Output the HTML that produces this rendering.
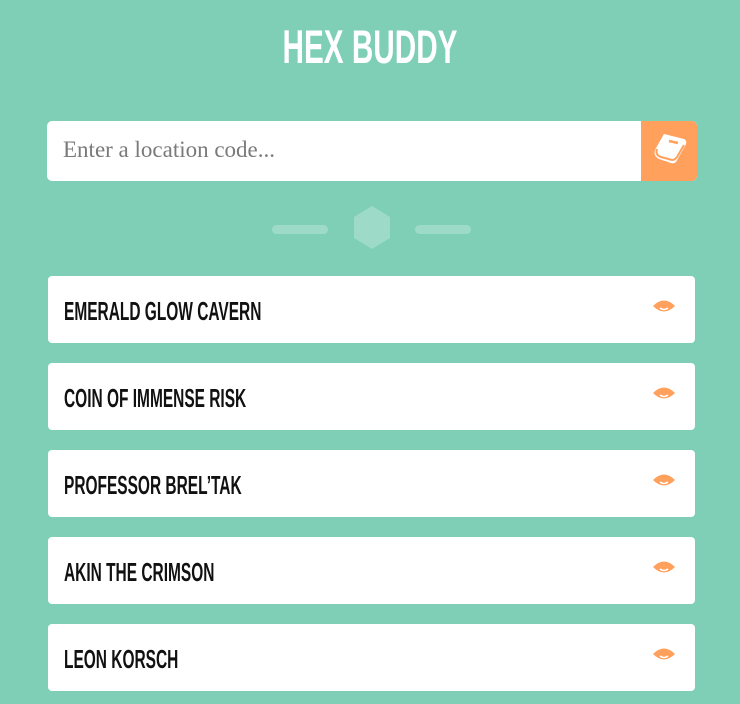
<!DOCTYPE html>
<html><head><style>
body{margin:0;width:740px;height:704px;background:#7ecfb5;font-family:"Liberation Sans",sans-serif;overflow:hidden;position:relative}
h1{position:absolute;top:19px;left:0;width:740px;text-align:center;margin:0;color:#fff;font-size:47px;font-weight:bold;transform:scaleX(0.632);letter-spacing:0}
.inp{position:absolute;left:47px;top:121px;width:650px;height:60px;background:#fff;border-radius:5px;overflow:hidden}
.inp span{position:absolute;left:16px;top:16px;font-family:"Liberation Serif",serif;font-size:23px;color:#7a7a7a}
.btn{position:absolute;right:0;top:0;width:56px;height:60px;background:#ffa15c}
.bar{position:absolute;top:225px;width:56px;height:9px;border-radius:5px;background:#9ddbc8}
.card{position:absolute;left:48px;width:647px;height:67px;background:#fff;border-radius:4px}
.card b{position:absolute;left:16px;top:20px;font-size:26px;font-weight:bold;color:#111;white-space:nowrap;transform:scaleX(0.595);transform-origin:left}
.card svg{position:absolute;left:604px;top:22px}
</style></head><body>
<h1>HEX BUDDY</h1>
<div class="inp"><span>Enter a location code...</span><div class="btn">
<svg width="56" height="60" viewBox="0 0 56 60"><path d="M23 13 L43 18 Q47 20 44 25 L35 41 Q33 43 30 42 L18 38 Q11 34 15 27 Z" fill="#fff"/><path d="M16 28 Q14 34 20 36 L31 39 Q34 39 36 36 L43 24" fill="none" stroke="#ffa15c" stroke-width="2"/><path d="M28 20 L37 22" stroke="#ffa15c" stroke-width="2.5"/></svg></div></div>
<div class="bar" style="left:272px"></div><div class="bar" style="left:415px"></div>
<svg style="position:absolute;left:353px;top:206px" width="38" height="43"><polygon points="19,0 37,11 37,32 19,43 1,32 1,11" fill="#9ddbc8"/></svg>
<div class="card" style="top:276px"><b>EMERALD GLOW CAVERN</b><svg width="24" height="16"><path d="M1 8 Q12 -3 23 8 Q12 19 1 8Z" fill="#ffa15c"/><path d="M8 10 Q12 13 16 10" stroke="#fff" stroke-width="1.5" fill="none"/></svg></div>
<div class="card" style="top:363px"><b>COIN OF IMMENSE RISK</b><svg width="24" height="16"><path d="M1 8 Q12 -3 23 8 Q12 19 1 8Z" fill="#ffa15c"/><path d="M8 10 Q12 13 16 10" stroke="#fff" stroke-width="1.5" fill="none"/></svg></div>
<div class="card" style="top:450px"><b>PROFESSOR BREL’TAK</b><svg width="24" height="16"><path d="M1 8 Q12 -3 23 8 Q12 19 1 8Z" fill="#ffa15c"/><path d="M8 10 Q12 13 16 10" stroke="#fff" stroke-width="1.5" fill="none"/></svg></div>
<div class="card" style="top:537px"><b>AKIN THE CRIMSON</b><svg width="24" height="16"><path d="M1 8 Q12 -3 23 8 Q12 19 1 8Z" fill="#ffa15c"/><path d="M8 10 Q12 13 16 10" stroke="#fff" stroke-width="1.5" fill="none"/></svg></div>
<div class="card" style="top:624px"><b>LEON KORSCH</b><svg width="24" height="16"><path d="M1 8 Q12 -3 23 8 Q12 19 1 8Z" fill="#ffa15c"/><path d="M8 10 Q12 13 16 10" stroke="#fff" stroke-width="1.5" fill="none"/></svg></div>
</body></html>
